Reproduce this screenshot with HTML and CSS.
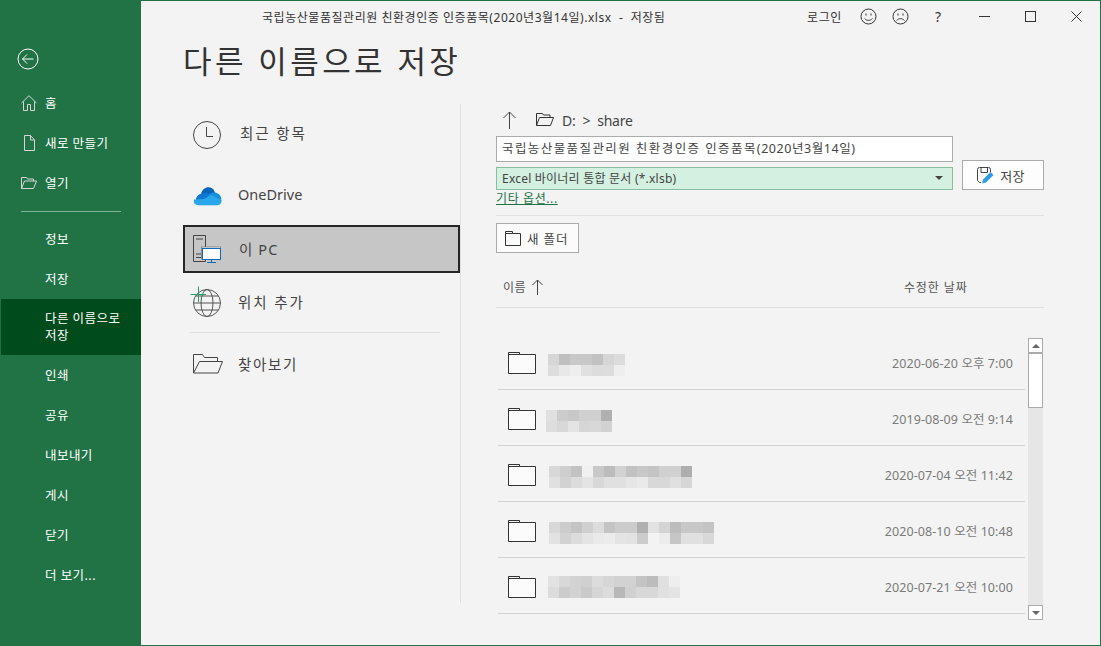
FILE: index.html
```html
<!DOCTYPE html>
<html lang="ko">
<head>
<meta charset="utf-8">
<title>다른 이름으로 저장</title>
<link rel="stylesheet" href="styles.css">
</head>
<body>
<div class="window">
  <aside class="sidebar">
    <button class="back" aria-label="뒤로">
      <svg width="22" height="22" viewBox="0 0 22 22" fill="none" stroke="#fff" stroke-width="1"><circle cx="11" cy="11" r="10"/><path d="M16.5 11H5.5M10 6.5 5.5 11l4.5 4.5"/></svg>
    </button>
    <nav class="nav">
      <a class="nav-item"><svg class="nav-icon" width="16" height="16" viewBox="0 0 16 16" fill="none" stroke="#d6d6d6"><path d="M.5 8 8 .7 15.5 8M2.5 6.5v9h4v-6h3v6h4v-9"/></svg>홈</a>
      <a class="nav-item"><svg class="nav-icon" width="16" height="16" viewBox="0 0 16 16" fill="none" stroke="#d6d6d6"><path d="M3.5.5h6l4 4.5v10.500h-10zM9.500.5V5h4"/></svg>새로 만들기</a>
      <a class="nav-item"><svg class="nav-icon" width="16" height="16" viewBox="0 0 16 16" fill="none" stroke="#d6d6d6"><path d="M.5 13.500v-11h5l1 1.500h6v2M.5 13.500l3-7.500h12l-3 7.500z"/></svg>열기</a>
    </nav>
    <hr class="nav-rule">
    <nav class="nav">
      <a class="nav-item">정보</a>
      <a class="nav-item">저장</a>
      <a class="nav-item nav-item-active">다른 이름으로<br>저장</a>
      <a class="nav-item">인쇄</a>
      <a class="nav-item">공유</a>
      <a class="nav-item">내보내기</a>
      <a class="nav-item">게시</a>
      <a class="nav-item">닫기</a>
      <a class="nav-item">더 보기...</a>
    </nav>
  </aside>

  <main class="main">
    <header class="titlebar">
      <div class="doc-title">국립농산물품질관리원 친환경인증 인증품목(2020년3월14일).xlsx&nbsp; -&nbsp; 저장됨</div>
      <div class="login">로그인</div>
      <svg class="tb-face" width="17" height="17" viewBox="0 0 17 17" fill="none" stroke="#333"><circle cx="8.500" cy="8.500" r="7.500"/><path d="M6 5.500v2M11 5.500v2M4.700 10.500c1.800 2.500 5.800 2.500 7.600 0"/></svg>
      <svg class="tb-face" width="17" height="17" viewBox="0 0 17 17" fill="none" stroke="#333"><circle cx="8.500" cy="8.500" r="7.500"/><path d="M6 5.500v2M11 5.500v2M4.700 12.500c1.800-2.500 5.800-2.500 7.600 0"/></svg>
      <div class="tb-help">?</div>
      <svg class="tb-ctl tb-min" width="11" height="11" viewBox="0 0 11 11" stroke="#333" fill="none"><path d="M0 5.500h11"/></svg>
      <svg class="tb-ctl" width="11" height="11" viewBox="0 0 11 11" stroke="#333" fill="none"><rect x=".5" y=".5" width="10" height="10"/></svg>
      <svg class="tb-ctl" width="11" height="11" viewBox="0 0 11 11" stroke="#333" fill="none"><path d="m.5.500 10 10M10.500.500l-10 10"/></svg>
    </header>

    <h1 class="heading">다른 이름으로 저장</h1>

    <div class="content">
      <section class="places">
        <div class="place place-recent">
          <svg class="place-icon" width="30" height="30" viewBox="0 0 30 30" fill="none" stroke="#444"><circle cx="15" cy="15" r="13.500"/><path d="M14.500 7v9.500H21"/></svg>
          <span class="place-label">최근 항목</span>
        </div>
        <div class="place place-drive">
          <svg class="place-icon" width="30" height="22" viewBox="0 0 30 22">
            <path d="M8 8C9.500 2 16 -1 20.500 3.500l2 4-8 6-9-4z" fill="#0364b8"/>
            <path d="M10 7.500c3-1.500 6-1 8 1.500l5 4-8 6-12-3V13c.5-3 3-5.500 7-5.500z" fill="#0f78d4"/>
            <path d="M19 6.800c4-1.200 9 1.200 9.500 6.500L23 16l-8-4.500c.5-2.500 2-4 4-4.700z" fill="#1490df"/>
            <path d="M5 19h20c2.500 0 3.700-2.500 3.600-5L18 9l-7 4-10 .5c-.5 3 .5 5.500 4 5.500z" fill="#28a8ea"/>
            <path d="M5 19.500h20" stroke="#b9d8ec"/>
          </svg>
          <span class="place-label">OneDrive</span>
        </div>
        <div class="place place-active">
          <svg class="place-icon" width="30" height="30" viewBox="0 0 30 30" fill="none">
            <path d="M.5 1.500h12v26H.5z" stroke="#444"/><path d="M3 5h7M3 20h5M3 23.500h5" stroke="#444"/>
            <rect x="8.500" y="13" width="19" height="12" fill="#fff" stroke="#8a8a8a"/>
            <rect x="9.500" y="14.500" width="18" height="11" fill="#fff" stroke="#0f6cbd"/>
            <path d="M18.500 25.500v3M14 28.500h9" stroke="#0f6cbd"/>
          </svg>
          <span class="place-label">이 PC</span>
        </div>
        <div class="place place-add">
          <svg class="place-icon" width="32" height="32" viewBox="0 0 32 32" fill="none">
            <circle cx="17" cy="17" r="13.500" stroke="#555"/>
            <ellipse cx="17" cy="17" rx="6" ry="13.500" stroke="#555"/>
            <path d="M3.500 17h27M5.500 10h23M5.500 24h23" stroke="#555"/>
            <path d="M8.500 .5v15.500M.5 8.500h15.500" stroke="#21a366"/>
          </svg>
          <span class="place-label">위치 추가</span>
        </div>
        <hr class="place-rule">
        <div class="place place-browse">
          <svg class="place-icon" width="30" height="20" viewBox="0 0 30 20" fill="none" stroke="#444"><path d="M.5 19V.500h9l2 3h13v4M.5 19l6-11.500h23L25 19z"/></svg>
          <span class="place-label">찾아보기</span>
        </div>
      </section>

      <div class="divider"></div>

      <section class="browser">
        <div class="path">
          <svg class="path-up" width="13" height="18" viewBox="0 0 13 18" fill="none" stroke="#444"><path d="M6.500 18V1M.5 7l6-6 6 6"/></svg>
          <svg class="path-folder" width="18" height="13" viewBox="0 0 18 13" fill="none" stroke="#333"><path d="M.5 12.500V.500h6l1 1.500h6.500v2.500M.5 12.500l3-8h14l-3 8z"/></svg>
          <span class="path-text">D:&nbsp; &gt;&nbsp; share</span>
        </div>
        <div class="file-row">
          <div class="file-fields">
            <div class="name-input"><span class="name-ko">국립농산물품질관리원 친환경인증 인증품목</span><span class="name-date">(2020년3월14일)</span></div>
            <div class="type-select">Excel 바이너리 통합 문서 (*.xlsb)<span class="caret"></span></div>
          </div>
          <button class="save-btn">
            <svg width="17" height="17" viewBox="0 0 17 17" fill="none"><path d="M4 15.500H2.500l-2-2V2.500q0-2 2-2h9q2 0 2 2V5" stroke="#444"/><path d="M4 .5v5h6.500v-5" stroke="#444"/><path d="M5 16.500l1-4 7.500-7.500 3 3L9 15.500z" fill="#2f9be0"/></svg>
            저장
          </button>
        </div>
        <a class="more-link">기타 옵션...</a>
        <hr class="rule rule-options">
        <button class="folder-btn">
          <svg width="16" height="15" viewBox="0 0 16 15" fill="none" stroke="#333"><path d="M.5 14.500V.500h7v2h8v12z"/><path d="M.5 2.500h7"/></svg>
          새 폴더
        </button>
        <div class="list-head">
          <span class="col-name">이름</span>
          <svg class="sort" width="11" height="16" viewBox="0 0 11 16" fill="none" stroke="#444"><path d="M5.500 16V1M.5 6l5-5 5 5"/></svg>
          <span class="col-date">수정한 날짜</span>
        </div>
        <div class="list-wrap">
          <div class="rows">
            <div class="row">
              <svg class="folder" width="28" height="22" viewBox="0 0 28 22"><path d="M.5 21.500V.500h11v2h16v19z" fill="#fbfbfb" stroke="#333"/><path d="M.5 2.500h11" stroke="#333"/></svg>
              <svg class="mosaic" width="170" height="22"><rect x="2" fill="#d6d6d6"/><rect x="13" fill="#bfbfbf"/><rect x="24" fill="#c8c8c8"/><rect x="35" fill="#c8c8c8"/><rect x="46" fill="#c2c2c2"/><rect x="57" fill="#d6d6d6"/><rect x="68" fill="#dcdcdc"/><rect x="2" y="11" fill="#dddddd"/><rect x="13" y="11" fill="#e8e8e8"/><rect x="24" y="11" fill="#eeeeee"/><rect x="35" y="11" fill="#e0e0e0"/><rect x="46" y="11" fill="#dcdcdc"/><rect x="57" y="11" fill="#dddddd"/><rect x="68" y="11" fill="#eeeeee"/></svg>
              <span class="date">2020-06-20 오후 7:00</span>
            </div>
            <div class="row">
              <svg class="folder" width="28" height="22" viewBox="0 0 28 22"><path d="M.5 21.500V.500h11v2h16v19z" fill="#fbfbfb" stroke="#333"/><path d="M.5 2.500h11" stroke="#333"/></svg>
              <svg class="mosaic" width="170" height="22"><rect x="0" fill="#e0e0e0"/><rect x="11" fill="#cccccc"/><rect x="22" fill="#c8c8c8"/><rect x="33" fill="#d0d0d0"/><rect x="44" fill="#d0d0d0"/><rect x="55" fill="#b0b0b0"/><rect x="0" y="11" fill="#dddddd"/><rect x="11" y="11" fill="#d8d8d8"/><rect x="22" y="11" fill="#e4e4e4"/><rect x="33" y="11" fill="#d6d6d6"/><rect x="44" y="11" fill="#d8d8d8"/><rect x="55" y="11" fill="#d2d2d2"/></svg>
              <span class="date">2019-08-09 오전 9:14</span>
            </div>
            <div class="row">
              <svg class="folder" width="28" height="22" viewBox="0 0 28 22"><path d="M.5 21.500V.500h11v2h16v19z" fill="#fbfbfb" stroke="#333"/><path d="M.5 2.500h11" stroke="#333"/></svg>
              <svg class="mosaic" width="170" height="22"><rect x="3" fill="#d8d8d8"/><rect x="14" fill="#cecece"/><rect x="25" fill="#c2c2c2"/><rect x="36" fill="#f0f0f0"/><rect x="47" fill="#c8c8c8"/><rect x="58" fill="#bcbcbc"/><rect x="69" fill="#d2d2d2"/><rect x="80" fill="#c2c2c2"/><rect x="91" fill="#c8c8c8"/><rect x="102" fill="#c4c4c4"/><rect x="113" fill="#d0d0d0"/><rect x="124" fill="#d0d0d0"/><rect x="135" fill="#aeaeae"/><rect x="3" y="11" fill="#e0e0e0"/><rect x="14" y="11" fill="#d2d2d2"/><rect x="25" y="11" fill="#dcdcdc"/><rect x="36" y="11" fill="#e4e4e4"/><rect x="47" y="11" fill="#d8d8d8"/><rect x="58" y="11" fill="#e0e0e0"/><rect x="69" y="11" fill="#e0e0e0"/><rect x="80" y="11" fill="#e6e6e6"/><rect x="91" y="11" fill="#eaeaea"/><rect x="102" y="11" fill="#d8d8d8"/><rect x="113" y="11" fill="#d8d8d8"/><rect x="124" y="11" fill="#e0e0e0"/><rect x="135" y="11" fill="#d6d6d6"/></svg>
              <span class="date">2020-07-04 오전 11:42</span>
            </div>
            <div class="row">
              <svg class="folder" width="28" height="22" viewBox="0 0 28 22"><path d="M.5 21.500V.500h11v2h16v19z" fill="#fbfbfb" stroke="#333"/><path d="M.5 2.500h11" stroke="#333"/></svg>
              <svg class="mosaic" width="170" height="22"><rect x="3" fill="#d8d8d8"/><rect x="14" fill="#cccccc"/><rect x="25" fill="#c4c4c4"/><rect x="36" fill="#d0d0d0"/><rect x="47" fill="#dcdcdc"/><rect x="58" fill="#c4c4c4"/><rect x="69" fill="#cccccc"/><rect x="80" fill="#cccccc"/><rect x="91" fill="#b0b0b0"/><rect x="102" fill="#e2e2e2"/><rect x="113" fill="#d4d4d4"/><rect x="124" fill="#bcbcbc"/><rect x="135" fill="#c8c8c8"/><rect x="146" fill="#c8c8c8"/><rect x="157" fill="#c4c4c4"/><rect x="3" y="11" fill="#e2e2e2"/><rect x="14" y="11" fill="#d2d2d2"/><rect x="25" y="11" fill="#dcdcdc"/><rect x="36" y="11" fill="#e4e4e4"/><rect x="47" y="11" fill="#eaeaea"/><rect x="58" y="11" fill="#ececec"/><rect x="69" y="11" fill="#e4e4e4"/><rect x="80" y="11" fill="#e2e2e2"/><rect x="91" y="11" fill="#cccccc"/><rect x="102" y="11" fill="#f3f3f3"/><rect x="113" y="11" fill="#ececec"/><rect x="124" y="11" fill="#c6c6c6"/><rect x="135" y="11" fill="#e0e0e0"/><rect x="146" y="11" fill="#e0e0e0"/><rect x="157" y="11" fill="#d8d8d8"/></svg>
              <span class="date">2020-08-10 오전 10:48</span>
            </div>
            <div class="row">
              <svg class="folder" width="28" height="22" viewBox="0 0 28 22"><path d="M.5 21.500V.500h11v2h16v19z" fill="#fbfbfb" stroke="#333"/><path d="M.5 2.500h11" stroke="#333"/></svg>
              <svg class="mosaic mosaic-high" width="170" height="22"><rect x="2" fill="#e2e2e2"/><rect x="13" fill="#d8d8d8"/><rect x="24" fill="#d2d2d2"/><rect x="35" fill="#d0d0d0"/><rect x="46" fill="#dcdcdc"/><rect x="57" fill="#d6d6d6"/><rect x="68" fill="#d2d2d2"/><rect x="79" fill="#d2d2d2"/><rect x="90" fill="#c4c4c4"/><rect x="101" fill="#bcbcbc"/><rect x="112" fill="#e0e0e0"/><rect x="123" fill="#eeeeee"/><rect x="2" y="11" fill="#dcdcdc"/><rect x="13" y="11" fill="#cccccc"/><rect x="24" y="11" fill="#d2d2d2"/><rect x="35" y="11" fill="#cacaca"/><rect x="46" y="11" fill="#d6d6d6"/><rect x="57" y="11" fill="#dcdcdc"/><rect x="68" y="11" fill="#b8b8b8"/><rect x="79" y="11" fill="#d0d0d0"/><rect x="90" y="11" fill="#d8d8d8"/><rect x="101" y="11" fill="#d8d8d8"/><rect x="112" y="11" fill="#e0e0e0"/><rect x="123" y="11" fill="#e4e4e4"/></svg>
              <span class="date">2020-07-21 오전 10:00</span>
            </div>
          </div>
          <div class="scrollbar">
            <div class="sb-btn"><span class="sb-up"></span></div>
            <div class="sb-thumb"></div>
            <div class="sb-track"></div>
            <div class="sb-btn"><span class="sb-down"></span></div>
          </div>
        </div>
      </section>
    </div>
  </main>
</div>
</body>
</html>
```

FILE: styles.css
```css
* { box-sizing: border-box; }
html, body { margin: 0; padding: 0; }
body {
  width: 1101px;
  height: 646px;
  overflow: hidden;
  font-family: "Noto Sans", "Noto Sans CJK KR", sans-serif;
  color: #444;
}
button { font: inherit; color: inherit; }
hr { margin: 0; border: 0; }

.window {
  display: flex;
  width: 1101px;
  height: 646px;
  background: #217346;
  padding: 1px 1px 1px 0;
}

/* sidebar */
.sidebar {
  width: 141px;
  flex: none;
  margin-top: -1px;
  padding-top: 48px;
  color: #fff;
  font-size: 12.5px;
  letter-spacing: .45px;
}
.back {
  display: block;
  width: 22px;
  height: 22px;
  padding: 0;
  margin: 0 0 13px 17px;
  border: 0;
  background: none;
}
.back svg { display: block; }
.nav { display: flex; flex-direction: column; }
.nav-item {
  display: flex;
  align-items: center;
  height: 40px;
  padding: 0 0 2px 45px;
  position: relative;
}
.nav-icon { position: absolute; left: 21px; top: 12px; }
.nav-item-active {
  display: block;
  height: 56px;
  margin-left: 1px;
  padding: 11px 0 0 44px;
  line-height: 17px;
  background: #004b1c;
}
.nav-rule {
  width: 100px;
  height: 1px;
  margin: 8px 0 7px 21px;
  background: #7fb397;
}

/* main */
.main {
  flex: 1;
  min-width: 0;
  background: #f3f3f3;
}
.titlebar {
  display: flex;
  align-items: center;
  height: 31px;
  font-size: 12px;
  color: #333;
}
.titlebar > * { flex: none; }
.doc-title { margin-left: 121px; width: 545px; white-space: nowrap; letter-spacing: .54px; }
.login { width: 53px; letter-spacing: .6px; }
.tb-face { margin-right: 15px; }
.tb-help { margin-left: 11px; width: 24px; font-size: 14px; }
.tb-ctl { margin-right: 35px; }
.tb-ctl:last-child { margin-right: 0; }
.tb-min { margin-left: 20px; }

.heading {
  height: 72px;
  margin: 0 0 0 42px;
  padding-top: 5px;
  font-size: 31px;
  line-height: 48px;
  font-weight: 400;
  color: #333;
  letter-spacing: 3.4px;
}

.content { display: flex; align-items: flex-start; }

/* places */
.places { width: 277px; margin-left: 42px; flex: none; }
.place {
  position: relative;
  font-size: 14.5px;
  color: #444;
}
.place-icon { position: absolute; left: 9px; }
.place-label {
  position: absolute;
  left: 55px;
  line-height: 20px;
  letter-spacing: 1.9px;
  white-space: nowrap;
}
.place-recent { height: 58px; }
.place-recent .place-icon { top: 16px; }
.place-recent .place-label { left: 57px; top: 19px; }
.place-drive { height: 63px; }
.place-drive .place-icon { left: 10px; top: 24px; }
.place-drive .place-label { top: 22px; letter-spacing: 0; }
.place-active {
  height: 48px;
  background: #c6c6c6;
  border: 2px solid #262626;
}
.place-active .place-icon { left: 8px; top: 7px; }
.place-active .place-label { left: 54px; top: 12px; letter-spacing: 1.1px; }
.place-add { height: 59px; }
.place-add .place-icon { left: 7px; top: 13px; }
.place-add .place-label { top: 19px; }
.place-rule { width: 251px; height: 1px; margin-left: 6px; background: #e1e1e1; }
.place-browse { height: 62px; }
.place-browse .place-icon { left: 10px; top: 21px; }
.place-browse .place-label { top: 21px; letter-spacing: 1.7px; }

.divider {
  width: 1px;
  height: 499px;
  flex: none;
  background: #e1e1e1;
}

/* browser */
.browser { width: 548px; margin-left: 35px; flex: none; }
.path { display: flex; align-items: center; height: 32px; padding-bottom: 1px; font-size: 14px; color: #444; }
.path-up { margin-left: 7px; }
.path-folder { margin-left: 20px; }
.path-text { margin-left: 8px; padding-top: 1px; letter-spacing: -.2px; }

.file-row { display: flex; align-items: flex-end; }
.file-fields { width: 457px; }
.name-input {
  height: 26px;
  padding-left: 5px;
  line-height: 24px;
  font-size: 12.5px;
  background: #fff;
  border: 1px solid #ababab;
  white-space: nowrap;
}
.name-ko { letter-spacing: 1.42px; }
.name-date { letter-spacing: .55px; }
.type-select {
  display: flex;
  align-items: center;
  justify-content: space-between;
  height: 23px;
  margin-top: 5px;
  padding: 0 9px 2px 5px;
  font-size: 12px;
  letter-spacing: .22px;
  background: #d3f0e0;
  border: 1px solid #86bfa0;
}
.caret {
  width: 0;
  height: 0;
  border-left: 4px solid transparent;
  border-right: 4px solid transparent;
  border-top: 4px solid #444;
}
.save-btn {
  display: flex;
  align-items: center;
  justify-content: center;
  gap: 6px;
  width: 82px;
  height: 30px;
  margin-left: 9px;
  padding: 0 4px 0 0;
  font-size: 13px;
  letter-spacing: .3px;
  background: #fdfdfd;
  border: 1px solid #ababab;
}
.more-link {
  display: block;
  height: 25px;
  font-size: 12px;
  line-height: 17px;
  letter-spacing: .6px;
  color: #217346;
  text-decoration: underline;
}
.rule { width: 100%; height: 1px; background: #e1e1e1; }
.rule-options { margin-bottom: 7px; }
.folder-btn {
  display: flex;
  align-items: center;
  gap: 6px;
  width: 83px;
  height: 30px;
  padding: 0 0 0 8px;
  font-size: 12.5px;
  letter-spacing: .9px;
  background: #fbfbfb;
  border: 1px solid #ababab;
}
.list-head {
  display: flex;
  align-items: center;
  height: 55px;
  padding: 13px 0 0 7px;
  font-size: 12px;
  color: #555;
  border-bottom: 1px solid #e1e1e1;
}
.col-name { letter-spacing: .4px; }
.sort { margin-left: 6px; }
.col-date { margin-left: 361px; letter-spacing: .9px; }

.list-wrap { display: flex; align-items: flex-start; padding-top: 26px; }
.rows { width: 527px; margin-left: 2px; }
.row {
  display: flex;
  align-items: flex-start;
  height: 56px;
  padding: 18px 12px 0 10px;
  border-bottom: 1px solid #d2d2d2;
}
.folder { flex: none; }
.mosaic { flex: none; margin: 2px 0 0 10px; }
.mosaic-high { margin-top: 0; }
.mosaic rect { width: 11px; height: 11px; }
.date {
  margin-left: auto;
  margin-top: 2px;
  font-size: 12.5px;
  line-height: 20px;
  letter-spacing: .08px;
  color: #7a7a7a;
  white-space: nowrap;
}

.scrollbar {
  display: flex;
  flex-direction: column;
  width: 15px;
  height: 282px;
  margin: 4px 0 0 3px;
  flex: none;
  background: #e6e6e6;
}
.sb-btn {
  display: flex;
  align-items: center;
  justify-content: center;
  height: 15px;
  flex: none;
  background: #fff;
  border: 1px solid #ababab;
}
.sb-up, .sb-down {
  width: 0;
  height: 0;
  border-left: 4px solid transparent;
  border-right: 4px solid transparent;
}
.sb-up { border-bottom: 4px solid #666; }
.sb-down { border-top: 4px solid #666; }
.sb-thumb {
  height: 55px;
  flex: none;
  background: #fff;
  border: 1px solid #ababab;
}
.sb-track { flex: 1; }
```
